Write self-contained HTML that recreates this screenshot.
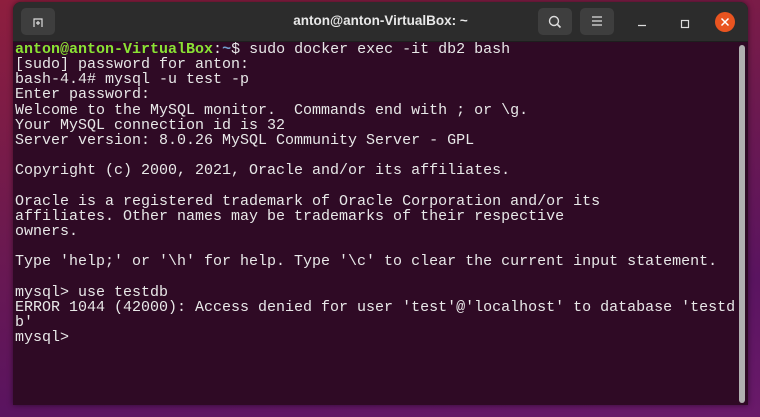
<!DOCTYPE html>
<html><head><style>
html,body{margin:0;padding:0;width:760px;height:417px;overflow:hidden;
background:linear-gradient(170deg,#8e1e3e 0%,#6e1a4e 40%,#5a1460 75%,#6a1a6a 100%);}
.win{position:absolute;left:13px;top:2px;width:735px;height:403px;background:#2f0a25;border-radius:8px 8px 0 0;overflow:hidden;box-shadow:0 0 6px rgba(0,0,0,.5)}
.tb{position:absolute;left:0;top:0;width:735px;height:39px;background:#2c2c2c;border-bottom:1px solid #1e1e1e}
.btn{position:absolute;top:6px;height:27px;width:34px;background:#3e3e3e;border-radius:5px}
.title{position:absolute;left:0;width:735px;top:11px;text-align:center;color:#e8e8e8;font:bold 13.5px "Liberation Sans",sans-serif;}
pre{position:absolute;left:2px;top:40px;margin:0;font:15px/15.15px "Liberation Mono",monospace;color:#e8e8e8;}
.g{color:#8ae234;font-weight:bold}.b{color:#729fcf;font-weight:bold}
.sb{position:absolute;left:726px;top:43px;width:6px;height:358px;background:#b0b0b0;border-radius:3px}
</style></head><body>
<div class="win">
<div class="tb">
<div class="btn" style="left:8px"><svg width="34" height="27"><path d="M13 19V11h8v8M15 15h4M17 13v4" stroke="#ddd" stroke-width="1.2" fill="none"/></svg></div>
<div class="title">anton@anton-VirtualBox: ~</div>
<div class="btn" style="left:525px"><svg width="34" height="27"><circle cx="16" cy="13" r="4.5" stroke="#ddd" stroke-width="1.4" fill="none"/><path d="M19.5 16.5l3 3" stroke="#ddd" stroke-width="1.6"/></svg></div>
<div class="btn" style="left:567px"><svg width="34" height="27"><path d="M12 9h10M12 13h10M12 17h10" stroke="#ddd" stroke-width="1.3"/></svg></div>
<svg style="position:absolute;left:620px;top:0" width="115" height="40"><path d="M5 23.5h8" stroke="#ddd" stroke-width="1.2"/><rect x="48.5" y="18.5" width="7" height="7" stroke="#ddd" stroke-width="1.2" fill="none"/><circle cx="92" cy="20" r="10" fill="#e95420"/><path d="M88.5 16.5l7 7M95.5 16.5l-7 7" stroke="#fff" stroke-width="1.5"/></svg>
</div>
<pre><span class="g">anton@anton-VirtualBox</span>:<span class="b">~</span>$ sudo docker exec -it db2 bash
[sudo] password for anton: 
bash-4.4# mysql -u test -p
Enter password: 
Welcome to the MySQL monitor.  Commands end with ; or \g.
Your MySQL connection id is 32
Server version: 8.0.26 MySQL Community Server - GPL

Copyright (c) 2000, 2021, Oracle and/or its affiliates.

Oracle is a registered trademark of Oracle Corporation and/or its
affiliates. Other names may be trademarks of their respective
owners.

Type 'help;' or '\h' for help. Type '\c' to clear the current input statement.

mysql&gt; use testdb
ERROR 1044 (42000): Access denied for user 'test'@'localhost' to database 'testd
b'
mysql&gt; </pre>
<div class="sb"></div>
</div>
</body></html>
